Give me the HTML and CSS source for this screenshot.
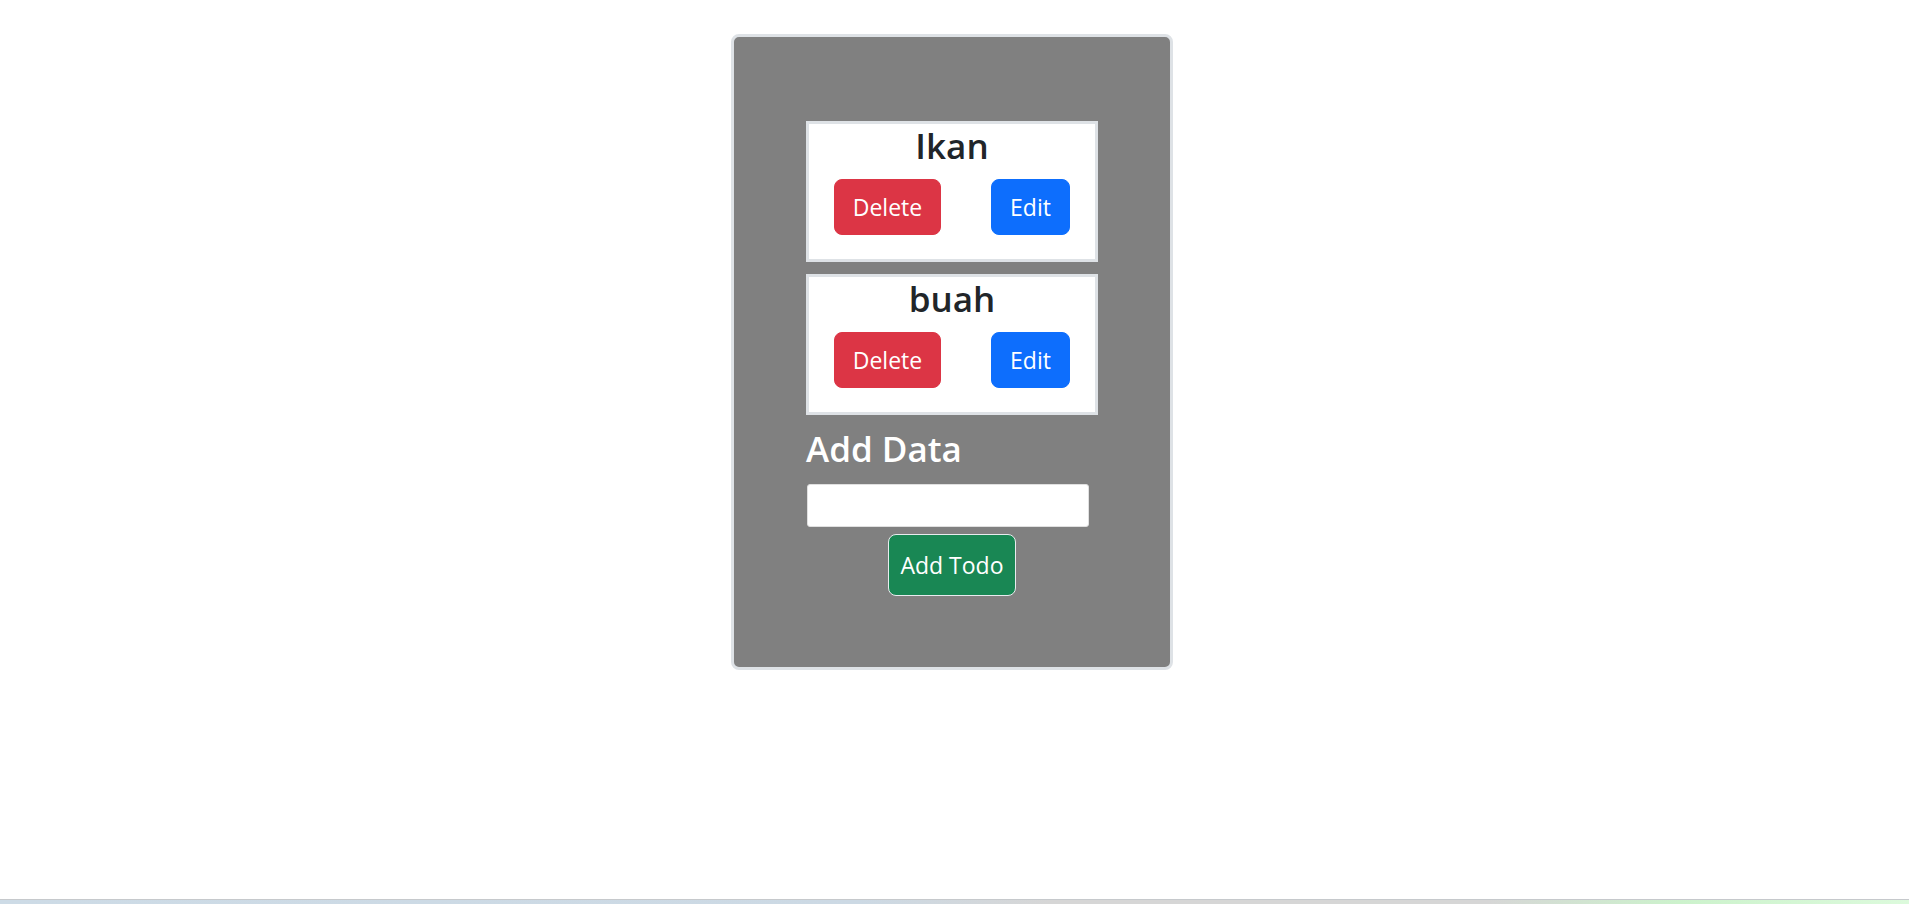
FILE: index.html
```html
<!DOCTYPE html>
<html lang="en">
<head>
<meta charset="utf-8">
<title>Todo</title>
<link rel="stylesheet" href="styles.css">
</head>
<body>
<div class="page">
  <main class="main">
    <section class="card">
      <div class="list">
        <div class="item">
          <h2 class="item-title">Ikan</h2>
          <div class="actions">
            <button class="btn btn-danger">Delete</button>
            <button class="btn btn-primary">Edit</button>
          </div>
        </div>
        <div class="item">
          <h2 class="item-title">buah</h2>
          <div class="actions">
            <button class="btn btn-danger">Delete</button>
            <button class="btn btn-primary">Edit</button>
          </div>
        </div>
      </div>
      <form class="add-form">
        <h2 class="add-title">Add Data</h2>
        <input class="add-input" type="text">
        <button type="button" class="btn btn-success">Add Todo</button>
      </form>
    </section>
  </main>
  <div class="strip"></div>
</div>
</body>
</html>
```
FILE: styles.css
```css
* { box-sizing: border-box; }
html, body { margin: 0; padding: 0; }
body {
  font-family: "Open Sans", "Noto Sans", sans-serif;
  color: #212529;
  background: #fff;
}
.page {
  min-height: 100vh;
  display: flex;
  flex-direction: column;
}
.main {
  flex: 1;
  display: flex;
  justify-content: center;
  align-items: flex-start;
  padding-top: 34px;
  padding-right: 5px;
}
.card {
  width: 442px;
  background: #808080;
  border: 3px solid #dee2e6;
  border-radius: 8px;
  padding: 84px 0 71px;
  display: flex;
  flex-direction: column;
  align-items: center;
}
.list {
  width: 292px;
  display: flex;
  flex-direction: column;
  gap: 12px;
}
.item {
  height: 141px;
  background: #fff;
  border: 3px solid #dee2e6;
  text-align: center;
}
.item-title {
  margin: 0;
  font-size: 35px;
  line-height: 44px;
  font-weight: 600;
  color: #212529;
}
.actions {
  margin-top: 11px;
  display: flex;
  justify-content: space-around;
}
.btn {
  font-family: inherit;
  height: 56px;
  padding: 0;
  font-size: 23px;
  line-height: 54px;
  color: #fff;
  border: 1px solid transparent;
  border-radius: 8px;
  cursor: pointer;
}
.btn-danger { background: #dc3545; border-color: #dc3545; width: 107px; }
.btn-primary { background: #0d6efd; border-color: #0d6efd; width: 79px; }
.btn-success {
  background: #198754;
  border-color: #e9ecef;
  width: 128px;
  height: 62px;
  line-height: 60px;
  margin-top: 7px;
  align-self: center;
}
.add-form {
  width: 292px;
  display: flex;
  flex-direction: column;
  align-items: flex-start;
}
.add-title {
  margin: 12px 0 0 0;
  font-size: 35px;
  line-height: 44px;
  font-weight: 600;
  color: #fff;
}
.add-input {
  margin: 13px 0 0 1px;
  width: 282px;
  height: 43px;
  border: 1px solid #e0e0e0;
  border-radius: 3px;
  background: #fff;
  font-family: inherit;
  font-size: 18px;
  padding: 0 8px;
}
.strip {
  height: 5px;
  border-top: 1px solid #c6c9cc;
  background: linear-gradient(to right, #cddbe6 0%, #ccd9e4 45%, #d6d6d6 55%, #d6d6d6 78%, #ccf2cc 88%, #dcfadc 100%);
}
```
